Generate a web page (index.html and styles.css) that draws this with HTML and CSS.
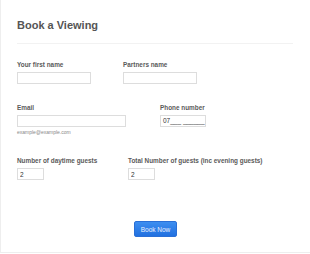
FILE: index.html
```html
<!DOCTYPE html>
<html lang="en">
<head>
  <meta charset="UTF-8" />
  <title>Book a Viewing</title>
  <link rel="stylesheet" href="styles.css">
</head>
<body>
  <div class="form">
    <h1 class="title">Book a Viewing</h1>
    <div class="divider"></div>

    <div class="row row-names">
      <div class="field">
        <label>Your first name</label>
        <input type="text" class="input-name">
      </div>
      <div class="field">
        <label>Partners name</label>
        <input type="text" class="input-name">
      </div>
    </div>

    <div class="row row-contact">
      <div class="field">
        <label>Email</label>
        <input type="text" class="input-email">
        <span class="sublabel">example@example.com</span>
      </div>
      <div class="field">
        <label>Phone number</label>
        <div class="masked input-phone" contenteditable="true">07___ ______</div>
      </div>
    </div>

    <div class="row row-guests">
      <div class="field">
        <label>Number of daytime guests</label>
        <input type="text" class="input-num" value="2">
      </div>
      <div class="field">
        <label>Total Number of guests (inc evening guests)</label>
        <input type="text" class="input-num" value="2">
      </div>
    </div>

    <div class="actions">
      <button class="submit">Book Now</button>
    </div>
  </div>
</body>
</html>
```

FILE: styles.css
```css
body {
  margin: 0;
  background: #fff;
  font-family: "Liberation Sans", Arial, sans-serif;
}

.form {
  height: 253px;
  box-sizing: border-box;
  border-left: 1px solid #eee;
  border-bottom: 1px solid #eee;
  padding: 17px 17px 0 16px;
}

.title {
  margin: 0;
  font-size: 11px;
  line-height: 16px;
  font-weight: bold;
  color: #555;
}

.divider {
  height: 1px;
  background: #f2f2f2;
  margin: 10px 0 0 0;
}

.row {
  display: flex;
}

.row-names {
  margin-top: 16px;
}

.row-names .field:first-child {
  width: 106px;
}

.row-contact {
  margin-top: 19px;
}

.row-contact .field:first-child {
  width: 143px;
}

.row-guests {
  margin-top: 21px;
}

.row-guests .field:first-child {
  width: 111px;
}

.field {
  display: flex;
  flex-direction: column;
  align-items: flex-start;
}

.field label {
  font-size: 6.4px;
  line-height: 9px;
  font-weight: bold;
  color: #5a5a5a;
  margin-bottom: 3px;
}

.field input,
.field .masked {
  box-sizing: border-box;
  height: 12px;
  border: 1px solid #ddd;
  padding: 0 2px;
  font-family: "Liberation Sans", Arial, sans-serif;
  font-size: 6.5px;
  line-height: 10px;
  color: #333;
  margin: 0;
  background: #fff;
}

.field .masked {
  white-space: nowrap;
  overflow: hidden;
  outline: none;
}

.input-name {
  width: 74px;
}

.input-email {
  width: 109px;
}

.input-phone {
  width: 46px;
}

.input-num {
  width: 27px;
}

.sublabel {
  font-size: 5px;
  color: #888;
  margin-top: 2px;
}

.actions {
  display: flex;
  justify-content: center;
  margin-top: 41px;
  padding-left: 1px;
}

.submit {
  width: 43px;
  height: 16px;
  border: 1px solid #2a6fd6;
  border-radius: 2px;
  background: linear-gradient(#3d8ef0, #2170e0);
  color: #e8f0ff;
  font-family: "Liberation Sans", Arial, sans-serif;
  font-size: 6.5px;
  padding: 0;
}
```
